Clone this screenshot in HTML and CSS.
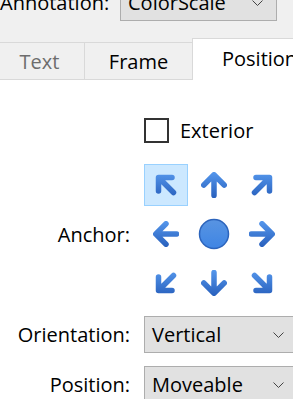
FILE: index.html
```html
<!DOCTYPE html>
<html>
<head>
<meta charset="utf-8">
<link rel="stylesheet" href="styles.css">
</head>
<body>
<div class="top">
  <div class="top-label">Annotation:</div>
  <div class="combo combo-top"><span>ColorScale</span><svg class="chev" width="11" height="6" viewBox="0 0 11 6"><polyline points="0.5,0.5 5.5,5.5 10.5,0.5" fill="none" stroke="#444" stroke-width="1"/></svg></div>
</div>
<div class="tabs">
  <div class="tab tab-first tab-disabled">Text</div>
  <div class="tab tab-mid">Frame</div>
  <div class="tab tab-active">Position</div>
</div>
<div class="panel">
  <div class="row row-check">
    <div class="label"></div>
    <div class="check"><span class="box"></span><span>Exterior</span></div>
  </div>
  <div class="row row-anchor">
    <div class="label">Anchor:</div>
    <div class="grid">
      <div class="cell sel"><svg width="26" height="26" viewBox="0 0 26 26"><defs><linearGradient id="g1" x1="0" y1="0" x2="0" y2="26" gradientUnits="userSpaceOnUse"><stop offset="0" stop-color="#5597ec"/><stop offset="1" stop-color="#2860bd"/></linearGradient></defs><path d="M20.5 20.5 L6 6 M5.5 19 V5.5 H19" fill="none" stroke="url(#g1)" stroke-width="5.5" stroke-linecap="round" stroke-linejoin="round"/></svg></div>
      <div class="cell"><svg width="26" height="26" viewBox="0 0 26 26"><defs><linearGradient id="g2" x1="0" y1="0" x2="0" y2="26" gradientUnits="userSpaceOnUse"><stop offset="0" stop-color="#5597ec"/><stop offset="1" stop-color="#2860bd"/></linearGradient></defs><path d="M13 23.5 V4 M2.8 13 L13 2.8 L23.2 13" fill="none" stroke="url(#g2)" stroke-width="5.5" stroke-linecap="round" stroke-linejoin="round"/></svg></div>
      <div class="cell"><svg width="26" height="26" viewBox="0 0 26 26"><defs><linearGradient id="g3" x1="0" y1="0" x2="0" y2="26" gradientUnits="userSpaceOnUse"><stop offset="0" stop-color="#5597ec"/><stop offset="1" stop-color="#2860bd"/></linearGradient></defs><path d="M5.5 20.5 L20 6 M7 5.5 H20.5 V19" fill="none" stroke="url(#g3)" stroke-width="5.5" stroke-linecap="round" stroke-linejoin="round"/></svg></div>
      <div class="cell"><svg width="26" height="26" viewBox="0 0 26 26"><defs><linearGradient id="g4" x1="0" y1="0" x2="0" y2="26" gradientUnits="userSpaceOnUse"><stop offset="0" stop-color="#5597ec"/><stop offset="1" stop-color="#2860bd"/></linearGradient></defs><path d="M23.5 13 H4 M13 2.8 L2.8 13 L13 23.2" fill="none" stroke="url(#g4)" stroke-width="5.5" stroke-linecap="round" stroke-linejoin="round"/></svg></div>
      <div class="cell"><svg width="32" height="32" viewBox="0 0 32 32"><defs><linearGradient id="g5" x1="0" y1="0" x2="0" y2="32" gradientUnits="userSpaceOnUse"><stop offset="0" stop-color="#5a95e2"/><stop offset="1" stop-color="#3d84e4"/></linearGradient></defs><circle cx="16" cy="16" r="14.5" fill="url(#g5)" stroke="#2c64bc" stroke-width="1.5"/></svg></div>
      <div class="cell"><svg width="26" height="26" viewBox="0 0 26 26"><defs><linearGradient id="g6" x1="0" y1="0" x2="0" y2="26" gradientUnits="userSpaceOnUse"><stop offset="0" stop-color="#5597ec"/><stop offset="1" stop-color="#2860bd"/></linearGradient></defs><path d="M2.5 13 H22 M13 2.8 L23.2 13 L13 23.2" fill="none" stroke="url(#g6)" stroke-width="5.5" stroke-linecap="round" stroke-linejoin="round"/></svg></div>
      <div class="cell"><svg width="26" height="26" viewBox="0 0 26 26"><defs><linearGradient id="g7" x1="0" y1="0" x2="0" y2="26" gradientUnits="userSpaceOnUse"><stop offset="0" stop-color="#5597ec"/><stop offset="1" stop-color="#2860bd"/></linearGradient></defs><path d="M20.5 5.5 L6 20 M5.5 7 V20.5 H19" fill="none" stroke="url(#g7)" stroke-width="5.5" stroke-linecap="round" stroke-linejoin="round"/></svg></div>
      <div class="cell"><svg width="26" height="26" viewBox="0 0 26 26"><defs><linearGradient id="g8" x1="0" y1="0" x2="0" y2="26" gradientUnits="userSpaceOnUse"><stop offset="0" stop-color="#5597ec"/><stop offset="1" stop-color="#2860bd"/></linearGradient></defs><path d="M13 2.5 V22 M2.8 13 L13 23.2 L23.2 13" fill="none" stroke="url(#g8)" stroke-width="5.5" stroke-linecap="round" stroke-linejoin="round"/></svg></div>
      <div class="cell"><svg width="26" height="26" viewBox="0 0 26 26"><defs><linearGradient id="g9" x1="0" y1="0" x2="0" y2="26" gradientUnits="userSpaceOnUse"><stop offset="0" stop-color="#5597ec"/><stop offset="1" stop-color="#2860bd"/></linearGradient></defs><path d="M5.5 5.5 L20 20 M7 20.5 H20.5 V7" fill="none" stroke="url(#g9)" stroke-width="5.5" stroke-linecap="round" stroke-linejoin="round"/></svg></div>
    </div>
  </div>
  <div class="row row-combo">
    <div class="label">Orientation:</div>
    <div class="combo combo-wide"><span>Vertical</span><svg class="chev" width="11" height="6" viewBox="0 0 11 6"><polyline points="0.5,0.5 5.5,5.5 10.5,0.5" fill="none" stroke="#444" stroke-width="1"/></svg></div>
  </div>
  <div class="row row-combo row-last">
    <div class="label">Position:</div>
    <div class="combo combo-wide"><span>Moveable</span><svg class="chev" width="11" height="6" viewBox="0 0 11 6"><polyline points="0.5,0.5 5.5,5.5 10.5,0.5" fill="none" stroke="#444" stroke-width="1"/></svg></div>
  </div>
</div>
</body>
</html>
```
FILE: styles.css
```css
html, body {
  margin: 0;
  padding: 0;
}
body {
  width: 293px;
  height: 399px;
  overflow: hidden;
  background: #f0f0f0;
  font-family: "Open Sans", "Noto Sans", sans-serif;
  font-size: 20px;
  color: #000;
}
.top {
  display: flex;
  align-items: center;
  height: 37px;
  margin-top: -16px;
}
.top-label {
  width: 107px;
  text-align: right;
  margin-right: 13px;
  white-space: nowrap;
  flex: none;
}
.combo {
  box-sizing: border-box;
  height: 37px;
  border: 1px solid #adadad;
  background: #e1e1e1;
  display: flex;
  align-items: center;
  justify-content: space-between;
  padding: 0 13px 0 7px;
  flex: none;
  white-space: nowrap;
}
.combo-top {
  width: 157px;
}
.combo-wide {
  width: 154px;
}
.chev {
  display: block;
  flex: none;
}
.tabs {
  margin-top: 17px;
  margin-left: -6px;
  height: 41px;
  display: flex;
  align-items: flex-end;
}
.tab {
  box-sizing: border-box;
  height: 37px;
  display: flex;
  align-items: center;
  justify-content: center;
  border-top: 1px solid #d9d9d9;
  background: #f0f0f0;
  white-space: nowrap;
  flex: none;
}
.tab-first {
  width: 91px;
  border-left: 1px solid #d9d9d9;
  border-right: 1px solid #d9d9d9;
}
.tab-disabled {
  color: #6d6d6d;
}
.tab-mid {
  width: 107px;
}
.tab-active {
  position: relative;
  z-index: 1;
  height: 42px;
  margin-bottom: -1px;
  width: 110px;
  justify-content: flex-start;
  padding: 0 0 2px 29px;
  background: #fff;
  border-left: 1px solid #d9d9d9;
}
.panel {
  background: #fff;
  border-top: 1px solid #d9d9d9;
  padding-top: 38px;
  height: 282px;
  overflow: hidden;
}
.row {
  display: flex;
  align-items: center;
  gap: 14px;
}
.label {
  width: 130px;
  text-align: right;
  white-space: nowrap;
  flex: none;
}
.row-check {
  height: 25px;
  margin-bottom: 21px;
}
.check {
  display: flex;
  align-items: center;
  gap: 11px;
}
.box {
  box-sizing: border-box;
  width: 25px;
  height: 25px;
  border: 2px solid #333;
  background: #fff;
  flex: none;
}
.row-anchor {
  margin-bottom: 12px;
}
.grid {
  display: grid;
  grid-template-columns: repeat(3, 44px);
  grid-template-rows: repeat(3, 42px);
  column-gap: 4px;
  row-gap: 7px;
}
.cell {
  box-sizing: border-box;
  display: flex;
  align-items: center;
  justify-content: center;
}
.cell svg {
  display: block;
}
.sel {
  background: #cce8ff;
  border: 1px solid #99d1ff;
}
.row-combo {
  margin-bottom: 13px;
}
```
